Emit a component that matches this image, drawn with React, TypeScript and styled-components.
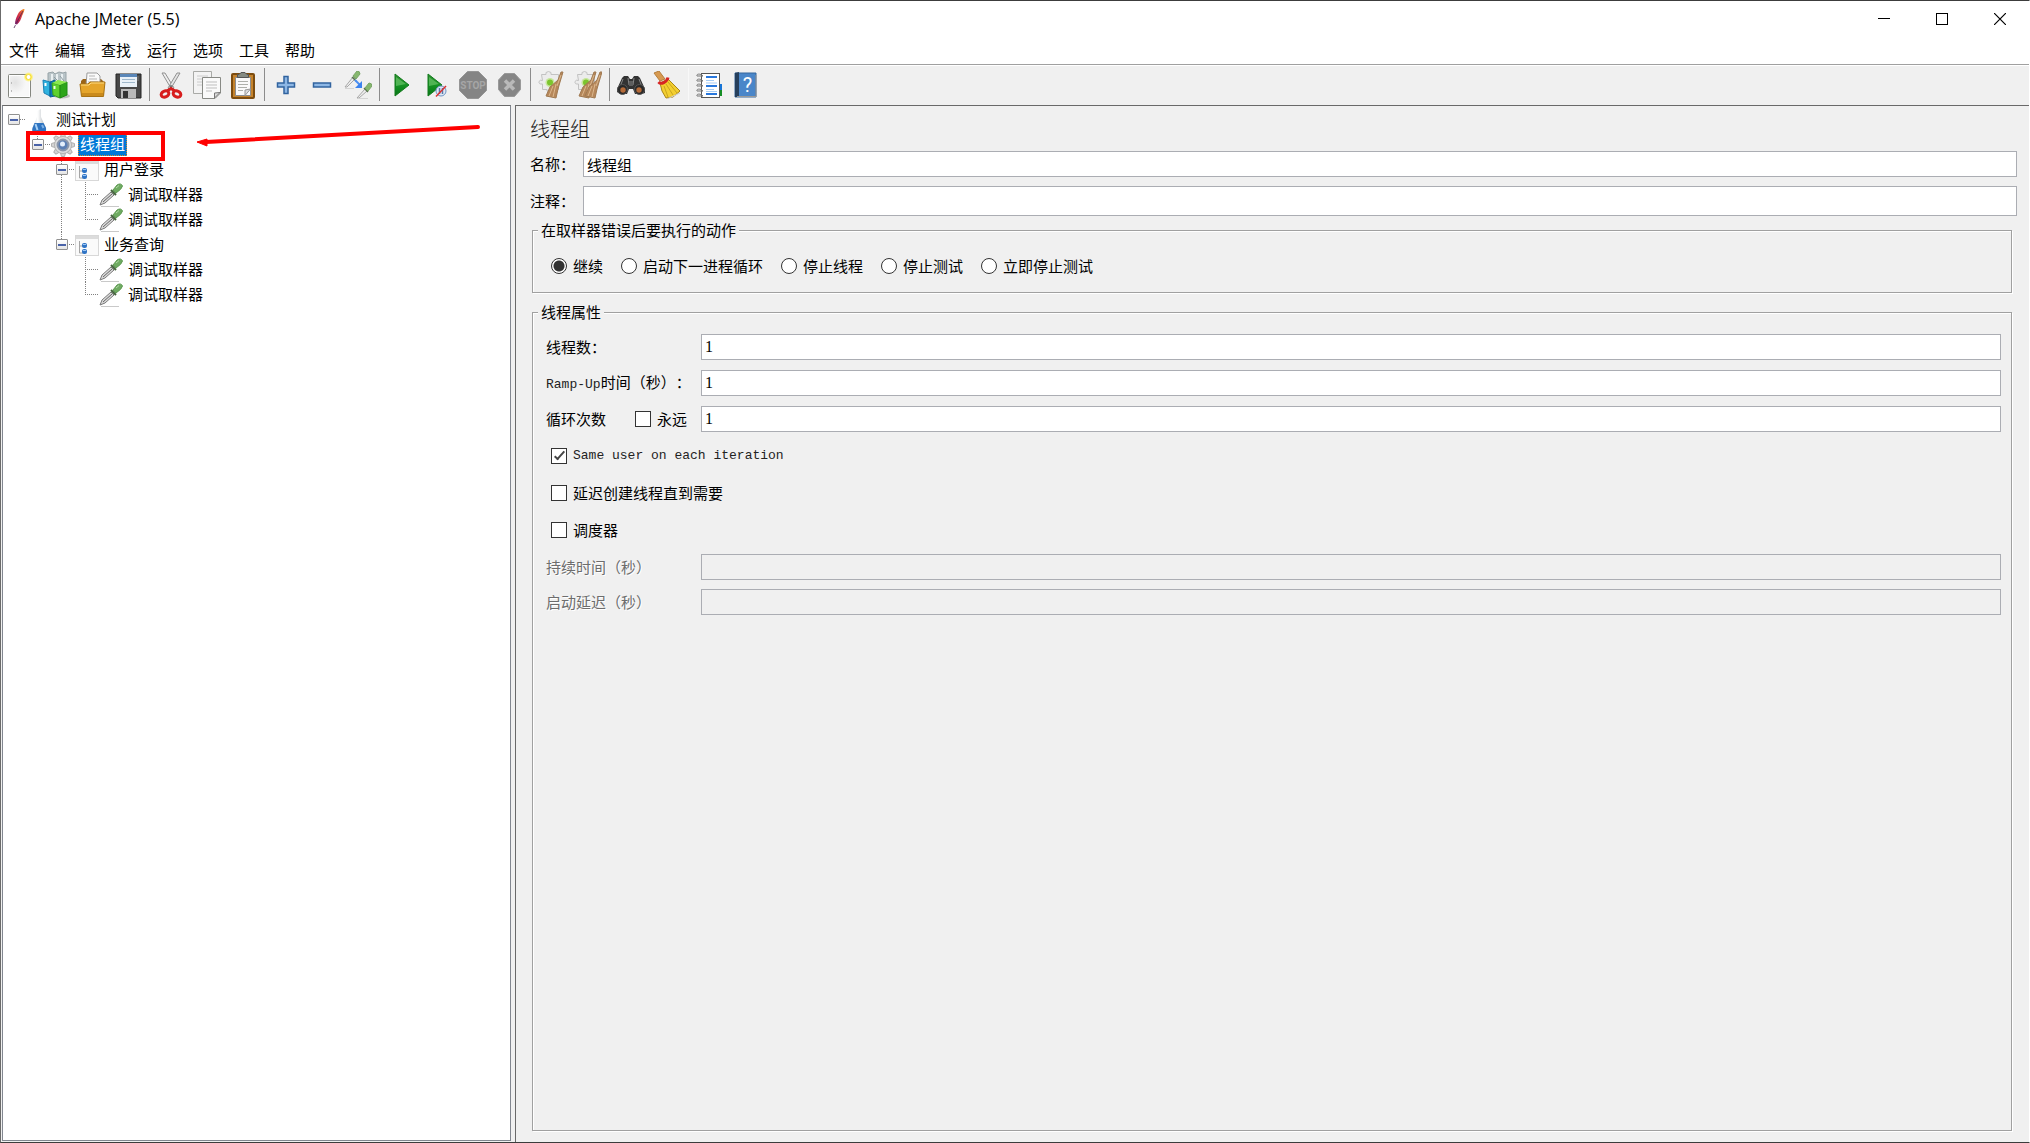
import React, { useState } from 'react';
import styled, { createGlobalStyle, css } from 'styled-components';

const GlobalStyle = createGlobalStyle`
  *, *::before, *::after { box-sizing: border-box; }
  body {
    margin: 0;
    background: #f0f0f0;
    color: #000;
    font-family: 'Noto Sans CJK SC', sans-serif;
    font-size: 15px;
    font-weight: 400;
    line-height: 20px;
    text-spacing-trim: space-all;
  }
  button, input { font: inherit; color: inherit; }
`;

/* ---------- window frame ---------- */

const Window = styled.div`
  display: flex;
  flex-direction: column;
  min-height: 100vh;
  border: 1px solid #6b6b6b;
  border-right-color: #fff;
  border-top-color: #3c3c3c;
  border-bottom-color: #3c3c3c;
`;

const TitleBar = styled.header`
  display: flex;
  align-items: center;
  height: 36px;
  padding-left: 10px;
  background: #fff;
`;

const AppTitle = styled.h1`
  flex: 1;
  margin: 0;
  padding-left: 8px;
  font: 400 16px/36px 'Open Sans', 'Noto Sans', sans-serif;
`;

const WindowButton = styled.button`
  display: flex;
  align-items: center;
  justify-content: center;
  width: 58px;
  height: 36px;
  padding: 0;
  border: 0;
  background: none;
`;

const MenuBar = styled.nav`
  display: flex;
  gap: 16px;
  height: 28px;
  padding-left: 8px;
  background: #fff;
  border-bottom: 1px solid #a0a0a0;
`;

const MenuItem = styled.button`
  padding: 0 0 2px;
  border: 0;
  background: none;
  line-height: 24px;
`;

const ToolBar = styled.div`
  display: flex;
  align-items: center;
  height: 40px;
  padding: 0 0 2px 1px;
  border-top: 1px solid #fff;
`;

const ToolButton = styled.button`
  display: flex;
  align-items: center;
  justify-content: center;
  width: 36px;
  height: 36px;
  padding: 0;
  border: 0;
  background: none;
`;

const Separator = styled.div<{ $faint?: boolean }>`
  width: 1px;
  height: 33px;
  margin: 0 3px;
  background: ${(p) => (p.$faint ? '#f8f8f8' : '#8c8c8c')};
`;

const Body = styled.main`
  display: flex;
  flex: 1;
  gap: 4px;
`;

/* ---------- tree ---------- */

const TreePanel = styled.aside`
  position: relative;
  flex: 0 0 25.1%;
  margin: 0 0 1px 1px;
  padding-top: 1px;
  background: #fff;
  border: 1px solid #828790;
  border-top: 1px solid #696969;
`;

const TreeRow = styled.div`
  display: flex;
  align-items: center;
  height: 25px;
`;

const vertical = 'repeating-linear-gradient(#808080 0 1px, transparent 1px 2px)';
const horizontal = 'repeating-linear-gradient(90deg, #808080 0 1px, transparent 1px 2px)';

type Guide = 'blank' | 'line' | 'tee' | 'elbow' | 'root' | 'open' | 'openLine';

const guides: Record<Guide, ReturnType<typeof css>> = {
  blank: css``,
  line: css`background: ${vertical} 10px 0 / 1px 100% no-repeat;`,
  tee: css`
    background: ${vertical} 10px 0 / 1px 100% no-repeat,
      ${horizontal} 10px 12px / 13px 1px no-repeat;
  `,
  elbow: css`
    background: ${vertical} 10px 0 / 1px 13px no-repeat,
      ${horizontal} 10px 12px / 13px 1px no-repeat;
  `,
  root: css`background: ${horizontal} 17px 12px / 5px 1px no-repeat;`,
  open: css`
    background: ${vertical} 10px 0 / 1px 12px no-repeat,
      ${horizontal} 10px 12px / 13px 1px no-repeat;
  `,
  openLine: css`
    background: ${vertical} 10px 0 / 1px 100% no-repeat,
      ${horizontal} 10px 12px / 13px 1px no-repeat;
  `,
};

const GuideCell = styled.span<{ $kind: Guide }>`
  display: flex;
  align-items: center;
  flex: 0 0 24px;
  height: 25px;
  padding-left: 5px;
  ${(p) => guides[p.$kind]}
`;

const Expander = styled.button`
  display: flex;
  align-items: center;
  justify-content: center;
  width: 12px;
  height: 11px;
  padding: 0;
  border: 1px solid #919191;
  border-radius: 1px;
  background: linear-gradient(#fff, #e4e4e4);

  &::before {
    content: '';
    width: 8px;
    height: 2px;
    background: #4a63a8;
  }
`;

const NodeLabel = styled.span<{ $selected: boolean }>`
  margin-left: 3px;
  padding: 0 2px;
  height: 23px;
  line-height: 22px;
  ${(p) =>
    p.$selected &&
    css`
      color: #fff;
      background: #0078d7;
      outline: 1px dotted #d98a2b;
      outline-offset: -1px;
    `}
`;

const Marker = styled.svg`
  position: absolute;
  top: 10px;
  left: 19px;
  pointer-events: none;
`;

/* ---------- right-hand form ---------- */

const Editor = styled.section`
  display: flex;
  flex-direction: column;
  flex: 1;
  min-width: 0;
  padding: 9px 12px 11px 14px;
  border-left: 1px solid #696969;
  border-top: 1px solid #696969;
`;

const EditorTitle = styled.h2`
  margin: 0 0 8px;
  font-size: 20px;
  font-weight: 300;
  line-height: 28px;
  color: #1a1a1a;
`;

const Field = styled.div<{ $gap?: number }>`
  display: flex;
  align-items: center;
  margin-top: ${(p) => p.$gap ?? 0}px;
`;

const FieldLabel = styled.label<{ $width: number; $muted?: boolean }>`
  flex: 0 0 ${(p) => p.$width}px;
  white-space: nowrap;
  ${(p) => p.$muted && css`color: #6d6d6d; text-shadow: 1px 1px 0 #fff;`}
`;

const TextBox = styled.input<{ $tall?: boolean; $digits?: boolean }>`
  flex: 1;
  min-width: 0;
  height: ${(p) => (p.$tall ? 30 : 26)}px;
  padding: 0 3px;
  border: 1px solid #abadb3;
  border-radius: 0;
  background: #fff;
  outline: none;
  ${(p) => p.$digits && css`font-family: 'Liberation Serif', serif; font-size: 16px;`}
  &:disabled { background: #f0f0f0; }
`;

const Group = styled.fieldset<{ $fill?: boolean }>`
  min-width: 0;
  margin: ${(p) => (p.$fill ? '9px' : '4px')} 5px 0 2px;
  padding: ${(p) => (p.$fill ? '12px 10px 12px 13px' : '16px 10px 16px 18px')};
  border: 1px solid #a0a0a0;
  box-shadow: inset 1px 1px 0 #fff, 1px 1px 0 #fff;
  ${(p) => p.$fill && css`flex: 1;`}
`;

const Legend = styled.legend<{ $fill?: boolean }>`
  margin-left: ${(p) => (p.$fill ? '-8px' : '-13px')};
  padding: 0 3px;
  background: #f0f0f0;
`;

const Options = styled.div`
  display: flex;
  gap: 18px;
`;

const Choice = styled.label<{ $indent?: number }>`
  display: inline-flex;
  align-items: center;
  gap: 6px;
  margin-left: ${(p) => p.$indent ?? 0}px;
`;

const Radio = styled.input.attrs({ type: 'radio' })`
  appearance: none;
  width: 16px;
  height: 16px;
  margin: 0;
  border: 1px solid #333;
  border-radius: 50%;
  background: #fff;
  &:checked { background: radial-gradient(circle, #333 0 5px, #fff 6px); }
`;

const Check = styled.input.attrs({ type: 'checkbox' })`
  appearance: none;
  display: grid;
  place-items: center;
  width: 16px;
  height: 16px;
  margin: 0;
  border: 1px solid #333;
  background: #fff;
  &:checked::before {
    content: '';
    width: 11px;
    height: 5px;
    margin-top: -3px;
    border: solid #444;
    border-width: 0 0 2px 2px;
    rotate: -48deg;
  }
`;

const Stack = styled.div<{ $gap: number; $top?: number }>`
  display: flex;
  flex-direction: column;
  gap: ${(p) => p.$gap}px;
  margin-top: ${(p) => p.$top ?? 0}px;
`;

const CheckRow = styled.div`
  display: flex;
  align-items: center;
  height: 26px;
`;

const LoopLabels = styled.div`
  display: flex;
  flex: 0 0 155px;
  justify-content: space-between;
  padding-right: 14px;
`;

const Latin = styled.span`
  font-family: 'Liberation Mono', monospace;
  font-size: 13px;
  color: #222;
`;

/* ---------- drawings ---------- */

const Svg = ({ children, size = 28 }: { children: React.ReactNode; size?: number }) => (
  <svg width={size} height={size} viewBox={`0 0 ${size} ${size}`} fill="none" aria-hidden="true">
    {children}
  </svg>
);

const Feather = () => (
  <svg width="16" height="22" viewBox="0 0 16 22" aria-hidden="true">
    <defs>
      <linearGradient id="feather" x1="1" y1="0" x2="0" y2="1">
        <stop offset="0" stopColor="#f69923" />
        <stop offset=".35" stopColor="#e0483c" />
        <stop offset=".7" stopColor="#c02050" />
        <stop offset="1" stopColor="#6d2a78" />
      </linearGradient>
    </defs>
    <path d="M13.500 1C11 1 8 3.500 6.500 7C5 10 4 13 4 16L6 16.500C9 14 10 11 11 8C12 5.500 13.500 3 13.500 1Z" fill="url(#feather)" />
    <path d="M12 3L5 16L3 20" stroke="#4b2350" strokeWidth=".8" strokeDasharray="14 2" fill="none" />
  </svg>
);

const NewIcon = () => (
  <Svg>
    <defs>
      <radialGradient id="sheet" cx=".3" cy=".35"><stop offset="0" stopColor="#e2e2e2" /><stop offset="1" stopColor="#f8f8f8" /></radialGradient>
      <radialGradient id="sun"><stop offset=".2" stopColor="#fffde0" /><stop offset=".6" stopColor="#ffee55" /><stop offset="1" stopColor="#ffee55" stopOpacity="0" /></radialGradient>
    </defs>
    <rect x="2.500" y="3.500" width="22" height="23" rx="1" fill="url(#sheet)" stroke="#858780" />
    <rect x="3.500" y="4.500" width="20" height="21" stroke="#fff" />
    <path d="M5.500 11V13M5.500 19V21" stroke="#bbb" />
    <circle cx="22.500" cy="6" r="5" fill="url(#sun)" />
    <circle cx="22.500" cy="6" r="2.500" stroke="#f2da35" fill="#fff" />
  </Svg>
);

const TemplatesIcon = () => (
  <Svg>
    <ellipse cx="20" cy="25" rx="8" ry="2.500" fill="#bbb" />
    <path d="M6 2L11 1L13 3L17 1L21 2L24 1V15H6Z" fill="#b9c4c8" stroke="#98a4a8" />
    <path d="M10 3V12M15 3V12M20 3V12" stroke="#e9eff1" strokeWidth="2" />
    <path d="M12 6L17 11M18 5L22 10" stroke="#8f9da2" />
    <path d="M1 9L8 11V25L2 22Z" fill="#2fb2df" stroke="#1a7fb4" />
    <path d="M8 11L13 9V25L8 26Z" fill="#0f78b5" stroke="#0b5f90" />
    <path d="M3.500 12V15" stroke="#fff" strokeWidth="2" />
    <path d="M10 12L18 14V27L11 24Z" fill="#5ed12d" stroke="#3aa01f" />
    <path d="M18 14L25 11V24L18 27Z" fill="#2da51a" stroke="#1f8a14" />
    <path d="M10 12L16 9L25 11L18 14Z" fill="#8aea4e" />
    <path d="M12.500 15V18" stroke="#eaffdf" strokeWidth="2" />
  </Svg>
);

const OpenIcon = () => (
  <Svg>
    <path d="M3 10L5 8H23L26 11V24H3Z" fill="#9a6418" />
    <path d="M9 2H19L22 5V15H8Z" fill="#fafafa" stroke="#9b9b9b" />
    <path d="M11 5H17M11 8H19M10 11H20" stroke="#b5b5b5" />
    <path d="M2 13H10L12 11H27L25.500 25.500H3.500Z" fill="#e5a52b" stroke="#a87214" />
    <path d="M3 14H11L13 12H26" stroke="#ffdc83" />
    <path d="M4 23.500H25" stroke="#c98a1c" strokeWidth="3" />
  </Svg>
);

const SaveIcon = () => (
  <Svg>
    <path d="M2 3H27V27H4L2 25Z" fill="#484848" stroke="#242424" />
    <rect x="6" y="3" width="17" height="13" fill="#e9f1f8" />
    <rect x="6" y="3" width="17" height="3" fill="#5a87b9" />
    <path d="M8 8.500H21M8 11.500H21" stroke="#9fb8cc" />
    <rect x="7" y="18" width="15" height="9" fill="#b9b9b9" />
    <rect x="9" y="20" width="5" height="7" fill="#333" />
    <path d="M24 5V10" stroke="#777" />
  </Svg>
);

const CutIcon = () => (
  <Svg>
    <path d="M5 2L8 2L17 17L15 19Z" fill="#eee" stroke="#909090" />
    <path d="M23 2L20 2L11 17L13 19Z" fill="#e4e4e4" stroke="#909090" />
    <circle cx="14" cy="15.500" r="1.500" fill="#777" />
    <ellipse cx="8" cy="23" rx="4" ry="3" transform="rotate(-25 8 23)" stroke="#d71d1d" strokeWidth="3" />
    <ellipse cx="20" cy="23" rx="4" ry="3" transform="rotate(25 20 23)" stroke="#d71d1d" strokeWidth="3" />
    <path d="M10 20L14 17.500L18 20" stroke="#d71d1d" strokeWidth="3" />
  </Svg>
);

const CopyIcon = () => (
  <Svg>
    <path d="M.5 .5H18.500V22.500H.5Z" fill="#f3f3f3" stroke="#a9aaa7" />
    <path d="M4 5H15M4 8H15M4 11H9M4 14H9" stroke="#ccc" />
    <path d="M9.500 6.500H27.500V22L22 27.500H9.500Z" fill="#fafafa" stroke="#888a85" />
    <path d="M13 11H24M13 14H24M13 17H24M13 20H19" stroke="#bdbdbd" />
    <path d="M27 21.500L21.500 27V22Z" fill="#ddd" stroke="#777" />
  </Svg>
);

const PasteIcon = () => (
  <Svg>
    <rect x="3" y="3" width="22" height="24" rx="1" fill="#c5832c" stroke="#7c4c0f" strokeWidth="2" />
    <path d="M6.500 6.500H21.500V24.500H6.500Z" fill="#fafafa" stroke="#8c8c8c" />
    <path d="M10 3.500L12 1.500H16L18 3.500H19.500V6.500H8.500V3.500Z" fill="#858b83" stroke="#555" />
    <path d="M9 10.500H19M9 13.500H19M9 16.500H18M9 19.500H14" stroke="#aeb0ab" />
    <path d="M21.500 18L16 24.500V19Z" fill="#dcdcdc" stroke="#999" />
  </Svg>
);

const PlusIcon = () => (
  <Svg>
    <path d="M12 5.500H16V12H22.500V16H16V22.500H12V16H5.500V12H12Z" fill="#8db7e5" stroke="#31639f" strokeWidth="1.500" />
  </Svg>
);

const MinusIcon = () => (
  <Svg><rect x="5.500" y="12" width="17" height="4" fill="#8db7e5" stroke="#31639f" strokeWidth="1.500" /></Svg>
);

const ToggleIcon = () => (
  <Svg>
    <path d="M1 16L9 6L11 8L3 16Z" fill="#eee" stroke="#a7a7a7" />
    <path d="M8 6L12 10" stroke="#59734e" strokeWidth="1.500" />
    <path d="M9 5L13 0Q16 0 16 3L12 8Z" fill="#86b76e" stroke="#78a566" />
    <path d="M13 27L21 18L23 20L15 27Z" fill="#eee" stroke="#a7a7a7" />
    <path d="M20 17L24 21" stroke="#59734e" strokeWidth="1.500" />
    <path d="M21 17L25 12Q28 12 28 15L24 20Z" fill="#86b76e" stroke="#78a566" />
    <path d="M11 9L16 14" stroke="#4b8ff3" strokeWidth="2" />
    <path d="M18 10V17H11Z" fill="#3c83ee" />
    <path d="M1 17.500H10M14 27.500H24" stroke="#d4d4d4" />
  </Svg>
);

const GreenPlay = ({ x = 0 }: { x?: number }) => (
  <>
    <defs><linearGradient id="play" x2="0" y2="1"><stop offset="0" stopColor="#2c8f2f" /><stop offset=".5" stopColor="#159324" /><stop offset="1" stopColor="#077516" /></linearGradient></defs>
    <path d={`M${8 + x} 3L${22 + x} 14L${8 + x} 25Z`} fill="url(#play)" stroke="#137b1d" />
    <path d={`M${9 + x} 6L${19 + x} 13L${9 + x} 15Z`} fill="#7ed07a" opacity=".55" />
  </>
);

const PlayIcon = () => <Svg><GreenPlay /></Svg>;

const PlayNoPauseIcon = () => (
  <Svg>
    <GreenPlay x={-3} />
    <circle cx="18" cy="20" r="5" fill="#dfe8f4" stroke="#6f94c4" />
    <path d="M16.500 17V23M19.500 17V23" stroke="#5878a6" strokeWidth="1.500" />
    <path d="M13 25.500L23 15" stroke="#da3030" strokeWidth="1.500" />
  </Svg>
);

const StopIcon = () => (
  <Svg>
    <path d="M8.500 .5H19.500L27.500 8.500V19.500L19.500 27.500H8.500L.5 19.500V8.500Z" fill="#858585" stroke="#969696" />
    <text x="14" y="18" textAnchor="middle" fontFamily="Roboto, sans-serif" fontWeight="700" fontSize="10" fill="#a6a6a6">STOP</text>
  </Svg>
);

const ShutdownIcon = () => (
  <Svg>
    <path d="M9.500 2.500H19.500L25.500 9V18.500L19.500 25.500H9.500L3.500 18.500V9Z" fill="#868686" stroke="#999" />
    <path d="M10 9.500L19 18.500M19 9.500L10 18.500" stroke="#b9b9b9" strokeWidth="3.500" />
  </Svg>
);

const Puzzle = () => (
  <>
    <path d="M3.500 3.500H8V1.500Q10.500 -.5 13 1.500V3.500H20.500V18.500H13Q12 21.500 9 20V18.500H4.500V13Q.5 13.500 1 10.500Q2 8.500 4.500 9.500Z" fill="#ececec" stroke="#c2c2c2" />
    <circle cx="12" cy="11.500" r="4.500" fill="#c7e69c" />
    <circle cx="12" cy="11.500" r="3" fill="#7cc52e" />
  </>
);

const Bristles = ({ x = 0 }: { x?: number }) => (
  <>
    <path d={`M${25 + x} 1L${22 + x} 9L${14 + x} 16L${10 + x} 25L${20 + x} 27L${22 + x} 18L${24 + x} 11L${27 + x} 1Z`} fill="#b6875a" stroke="#a07a52" />
    <path d={`M${17 + x} 15L${13 + x} 25M${20 + x} 13L${17 + x} 26M${25 + x} 4L${21 + x} 15`} stroke="#dcb88e" />
  </>
);

const ClearIcon = () => <Svg><Puzzle /><Bristles x={-2} /></Svg>;
const ClearAllIcon = () => <Svg><Puzzle /><Bristles x={-5} /><Bristles x={1} /></Svg>;

const BinocularsIcon = () => (
  <Svg>
    <path d="M5 7L7 5H11L13 8H15L17 5H21L23 7L28 18V22L25 23H18L16 18H12L10 23H3L0 21V18Z" fill="#333" />
    <path d="M6 8L3 16M11 7L12 14M17 7L16 14M22 8L25 16" stroke="#858585" />
    <circle cx="5.500" cy="18.500" r="5" fill="#292929" stroke="#555" />
    <circle cx="22.500" cy="18.500" r="5" fill="#292929" stroke="#555" />
    <circle cx="6" cy="19" r="2.700" fill="#b46a38" />
    <circle cx="22" cy="19" r="2.700" fill="#b46a38" />
    <rect x="12" y="10" width="4" height="5" fill="#5d5d5d" />
  </Svg>
);

const BroomIcon = () => (
  <Svg>
    <path d="M1 2L6 0L12 8L7 10Z" fill="#d79a51" stroke="#b57e3c" />
    <path d="M7 12L15 8L27 20L20 26L13 27L9 20Z" fill="#f3cf30" stroke="#aa8516" />
    <path d="M11 15L15 26M13 13L20 24M15 11L24 22" stroke="#c9a51f" />
    <path d="M5.500 11C8 14 14 11 15 6.500" stroke="#d72424" strokeWidth="3" />
    <path d="M15 27.500L27 22" stroke="#d0d0d0" />
  </Svg>
);

const ListIcon = () => (
  <Svg>
    <path d="M23 13H26V19H23Z" fill="#1775d7" />
    <path d="M23 19H26V25H23Z" fill="#148d24" />
    <rect x="5.500" y="2.500" width="18" height="24" fill="#fff" stroke="#555" />
    <path d="M10 6H21M10 15H21M10 23H21" stroke="#2877dc" strokeWidth="2" />
    <path d="M10 9.500H18M10 12H21M10 18.500H18M10 20.500H21" stroke="#a6ccf4" />
    {[5, 10, 15, 20, 25].map((y) => (
      <path key={y} d={`M7 ${y}C4 ${y - 3} 0 ${y - 2} 1 ${y}H7`} stroke="#777" />
    ))}
  </Svg>
);

const HelpIcon = () => (
  <Svg>
    <path d="M3 2H24V26H3Z" fill="#4a86c9" stroke="#34679e" />
    <path d="M3 2L7 1V26H3Z" fill="#263f5c" />
    <path d="M24 4V25.500H5" stroke="#999" />
    <text x="15.500" y="21" textAnchor="middle" fontFamily="Roboto, sans-serif" fontSize="20" fill="#fff">?</text>
  </Svg>
);

const FlaskIcon = () => (
  <Svg size={24}>
    <defs>
      <linearGradient id="glass"><stop offset="0" stopColor="#c9d0d5" /><stop offset=".4" stopColor="#fff" /><stop offset="1" stopColor="#a5adb3" /></linearGradient>
    </defs>
    <path d="M10 3L14 1V9L19 20Q19.500 24 17 24H7Q4.500 24 5.500 20L10 9Z" fill="url(#glass)" />
    <path d="M7.500 15H16.500L19 20Q19.500 24 17 24H7Q4.500 24 5.500 20Z" fill="#2f74c0" />
    <path d="M8.500 16L10.500 22" stroke="#a8d0f5" strokeWidth="2" />
    <path d="M15 17L16.500 20" stroke="#7fb3e6" strokeWidth="2" />
  </Svg>
);

const ThreadGroupIcon = () => (
  <Svg size={24}>
    {[0, 45, 90, 135, 180, 225, 270, 315].map((a) => (
      <path key={a} d="M9.500 4L10.500 .5H13.500L14.500 4Z" transform={`rotate(${a} 12 12)`} fill="#d4d4d4" stroke="#b0b0b0" />
    ))}
    <circle cx="12" cy="12" r="8.500" fill="#dedede" stroke="#b4b4b4" />
    <circle cx="12" cy="12" r="5.500" fill="#5b7fb4" stroke="#8b97ab" strokeWidth="2" />
    <circle cx="11.500" cy="11" r="2.500" fill="#e3eefb" />
  </Svg>
);

const ControllerIcon = () => (
  <Svg size={24}>
    <rect x=".5" y="2.500" width="23" height="20" fill="#fafafa" stroke="#d8d8d8" />
    <rect x="1" y="3" width="22" height="3" fill="#dcdcdc" />
    <path d="M4.500 8V20H8M4.500 13H8" stroke="#a5a5a5" />
    <rect x="7" y="10" width="5" height="5" rx="2" fill="#2f73c4" />
    <rect x="7" y="16" width="5" height="5" rx="2" fill="#2f73c4" />
    <path d="M8 11.500H11M8 17.500H11" stroke="#9bc6f5" />
  </Svg>
);

const SamplerIcon = () => (
  <Svg size={24}>
    <path d="M2 23.500H20" stroke="#c9c9c9" />
    <path d="M1 22L3 17L12 9L15 12L6 20Z" fill="#d9d9d9" stroke="#7a7a7a" />
    <path d="M4 19L13 11" stroke="#666" />
    <path d="M12 7L17 12" stroke="#43633b" strokeWidth="2" />
    <path d="M14 7L18 2Q22 -.5 23.500 3Q23 6 17 10Z" fill="#6fab62" stroke="#5f9a53" />
    <path d="M17 5L20 2.500" stroke="#b2d9a8" />
  </Svg>
);

/* ---------- data ---------- */

const menus = ['文件', '编辑', '查找', '运行', '选项', '工具', '帮助'];

const toolGroups: { name: string; icon: React.ReactNode }[][] = [
  [
    { name: '新建', icon: <NewIcon /> },
    { name: '模板', icon: <TemplatesIcon /> },
    { name: '打开', icon: <OpenIcon /> },
    { name: '保存', icon: <SaveIcon /> },
  ],
  [
    { name: '剪切', icon: <CutIcon /> },
    { name: '复制', icon: <CopyIcon /> },
    { name: '粘贴', icon: <PasteIcon /> },
  ],
  [
    { name: '展开', icon: <PlusIcon /> },
    { name: '折叠', icon: <MinusIcon /> },
    { name: '切换', icon: <ToggleIcon /> },
  ],
  [
    { name: '启动', icon: <PlayIcon /> },
    { name: '不停顿开始', icon: <PlayNoPauseIcon /> },
    { name: '停止', icon: <StopIcon /> },
    { name: '关闭', icon: <ShutdownIcon /> },
  ],
  [
    { name: '清除', icon: <ClearIcon /> },
    { name: '清除全部', icon: <ClearAllIcon /> },
  ],
  [
    { name: '搜索', icon: <BinocularsIcon /> },
    { name: '重置搜索', icon: <BroomIcon /> },
  ],
  [
    { name: '函数助手', icon: <ListIcon /> },
    { name: '帮助', icon: <HelpIcon /> },
  ],
];

const nodes: { label: string; icon: React.ReactNode; cells: Guide[] }[] = [
  { label: '测试计划', icon: <FlaskIcon />, cells: ['root'] },
  { label: '线程组', icon: <ThreadGroupIcon />, cells: ['blank', 'open'] },
  { label: '用户登录', icon: <ControllerIcon />, cells: ['blank', 'blank', 'openLine'] },
  { label: '调试取样器', icon: <SamplerIcon />, cells: ['blank', 'blank', 'line', 'tee'] },
  { label: '调试取样器', icon: <SamplerIcon />, cells: ['blank', 'blank', 'line', 'elbow'] },
  { label: '业务查询', icon: <ControllerIcon />, cells: ['blank', 'blank', 'open'] },
  { label: '调试取样器', icon: <SamplerIcon />, cells: ['blank', 'blank', 'blank', 'tee'] },
  { label: '调试取样器', icon: <SamplerIcon />, cells: ['blank', 'blank', 'blank', 'elbow'] },
];

const hasExpander = (kind: Guide) => kind === 'root' || kind === 'open' || kind === 'openLine';

const errorActions = ['继续', '启动下一进程循环', '停止线程', '停止测试', '立即停止测试'];

export default function App() {
  const [selected, setSelected] = useState(1);

  return (
    <>
      <GlobalStyle />
      <Window>
        <TitleBar>
          <Feather />
          <AppTitle>Apache JMeter (5.5)</AppTitle>
          <WindowButton aria-label="最小化">
            <svg width="12" height="12"><path d="M0 5.500H12" stroke="#000" /></svg>
          </WindowButton>
          <WindowButton aria-label="最大化">
            <svg width="12" height="12"><rect x=".5" y=".5" width="11" height="11" fill="none" stroke="#000" /></svg>
          </WindowButton>
          <WindowButton aria-label="关闭窗口">
            <svg width="12" height="12"><path d="M0 0L12 12M12 0L0 12" stroke="#000" strokeWidth="1.200" /></svg>
          </WindowButton>
        </TitleBar>
        <MenuBar>
          {menus.map((m) => <MenuItem key={m}>{m}</MenuItem>)}
        </MenuBar>
        <ToolBar>
          {toolGroups.map((group, i) => (
            <React.Fragment key={i}>
              {i > 0 && <Separator $faint={i === 6} />}
              {group.map((tool) => (
                <ToolButton key={tool.name} aria-label={tool.name}>{tool.icon}</ToolButton>
              ))}
            </React.Fragment>
          ))}
        </ToolBar>
        <Body>
          <TreePanel>
            {nodes.map((node, i) => (
              <TreeRow key={i} onClick={() => setSelected(i)}>
                {node.cells.map((kind, c) => (
                  <GuideCell key={c} $kind={kind}>
                    {hasExpander(kind) && <Expander aria-label={`折叠 ${node.label}`} />}
                  </GuideCell>
                ))}
                {node.icon}
                <NodeLabel $selected={selected === i}>{node.label}</NodeLabel>
              </TreeRow>
            ))}
            <Marker width="470" height="70" viewBox="0 0 470 70" aria-hidden="true">
              <rect x="6" y="17" width="135" height="26" fill="none" stroke="#f00" strokeWidth="4" />
              <path d="M456 11L184 26" stroke="#f00" strokeWidth="4" strokeLinecap="round" />
              <path d="M175 26L185 23V30Z" fill="#f00" stroke="#f00" strokeLinejoin="round" />
            </Marker>
          </TreePanel>
          <Editor>
            <EditorTitle>线程组</EditorTitle>
            <Field>
              <FieldLabel $width={53} htmlFor="name">名称：</FieldLabel>
              <TextBox id="name" defaultValue="线程组" />
            </Field>
            <Field $gap={9}>
              <FieldLabel $width={53} htmlFor="comment">注释：</FieldLabel>
              <TextBox id="comment" $tall />
            </Field>
            <Group>
              <Legend>在取样器错误后要执行的动作</Legend>
              <Options>
                {errorActions.map((a, i) => (
                  <Choice key={a}>
                    <Radio name="on-error" defaultChecked={i === 0} />
                    {a}
                  </Choice>
                ))}
              </Options>
            </Group>
            <Group $fill>
              <Legend $fill>线程属性</Legend>
              <Stack $gap={10}>
                <Field>
                  <FieldLabel $width={155} htmlFor="threads">线程数：</FieldLabel>
                  <TextBox id="threads" $digits defaultValue="1" />
                </Field>
                <Field>
                  <FieldLabel $width={155} htmlFor="ramp"><Latin>Ramp-Up</Latin>时间（秒）：</FieldLabel>
                  <TextBox id="ramp" $digits defaultValue="1" />
                </Field>
                <Field>
                  <LoopLabels>
                    <label htmlFor="loops">循环次数</label>
                    <Choice><Check />永远</Choice>
                  </LoopLabels>
                  <TextBox id="loops" $digits defaultValue="1" />
                </Field>
              </Stack>
              <Stack $gap={11} $top={11}>
                <CheckRow>
                  <Choice $indent={5}><Check defaultChecked /><Latin>Same user on each iteration</Latin></Choice>
                </CheckRow>
                <CheckRow>
                  <Choice $indent={5}><Check />延迟创建线程直到需要</Choice>
                </CheckRow>
                <CheckRow>
                  <Choice $indent={5}><Check />调度器</Choice>
                </CheckRow>
              </Stack>
              <Stack $gap={9} $top={11}>
                <Field>
                  <FieldLabel $width={155} $muted htmlFor="duration">持续时间（秒）</FieldLabel>
                  <TextBox id="duration" disabled />
                </Field>
                <Field>
                  <FieldLabel $width={155} $muted htmlFor="delay">启动延迟（秒）</FieldLabel>
                  <TextBox id="delay" disabled />
                </Field>
              </Stack>
            </Group>
          </Editor>
        </Body>
      </Window>
    </>
  );
}
